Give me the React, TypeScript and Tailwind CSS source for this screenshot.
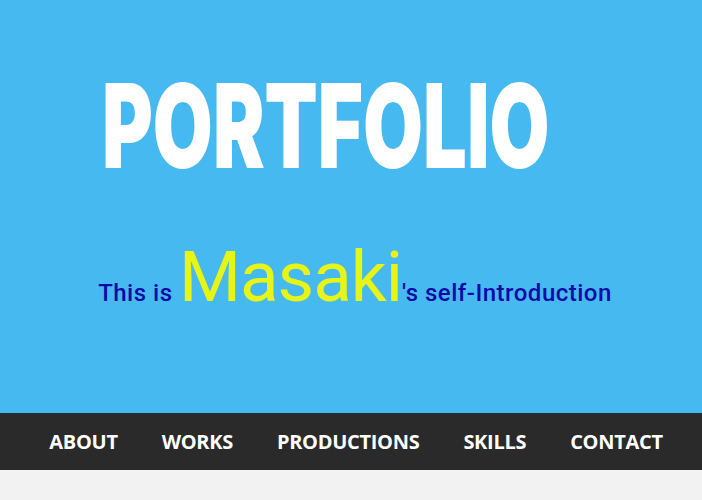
const navItems = ["ABOUT", "WORKS", "PRODUCTIONS", "SKILLS", "CONTACT"];

export default function App() {
  return (
    <div className="min-h-[500px] bg-[#f2f2f2]">
      <header className="flex h-[413px] flex-col bg-[#46b9f0]">
        <div className="pl-[102px] pt-[61px]">
          <h1 className="origin-left scale-x-[0.662] font-['Inter',sans-serif] text-[117px] font-black leading-[130px] text-white">
            PORTFOLIO
          </h1>
        </div>
        <p className="mt-[50px] pl-[8px] text-center font-['Roboto',sans-serif] text-[#0b0ba8]">
          <span className="text-[24px] font-medium tracking-[0.5px]">This is </span>
          <span className="text-[71px] leading-none tracking-[-1px] text-[#e6f516]">Masaki</span>
          <span className="text-[24px] font-medium tracking-[0.5px]">'s self-Introduction</span>
        </p>
      </header>
      <nav className="flex h-[57px] items-center justify-center gap-[44px] bg-[#2a2a2a] pl-[10px]">
        {navItems.map((item) => (
          <a
            key={item}
            href="#"
            className="font-['Open_Sans',sans-serif] text-[20px] font-bold tracking-[-0.3px] text-white"
          >
            {item}
          </a>
        ))}
      </nav>
    </div>
  );
}
